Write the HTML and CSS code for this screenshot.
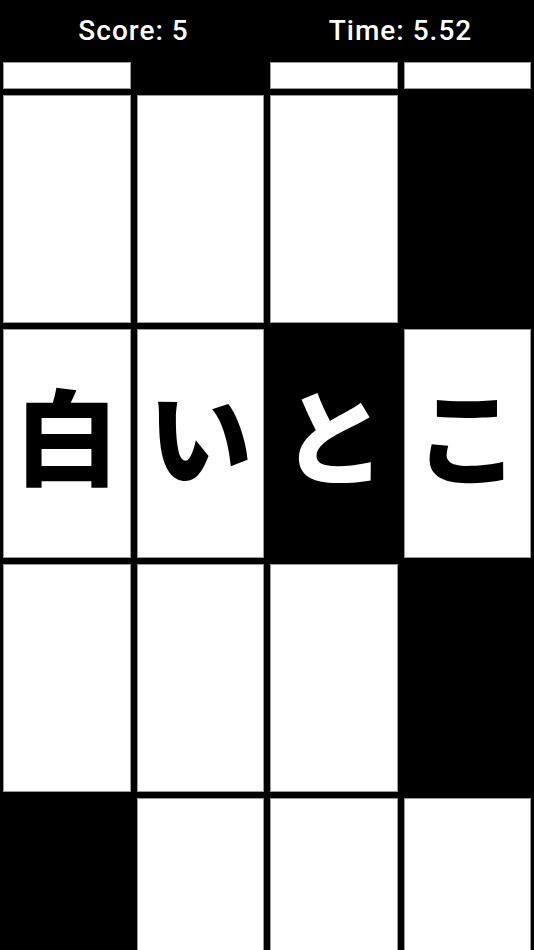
FILE: index.html
```html
<!DOCTYPE html>
<html lang="ja">
<head>
<meta charset="utf-8">
<title>Piano Tiles</title>
<link rel="stylesheet" href="styles.css">
</head>
<body>
<div class="screen">
  <header class="hud">
    <div class="hud-item">Score: 5</div>
    <div class="hud-item">Time: 5.52</div>
  </header>
  <main class="board">
    <div class="tile partial"></div>
    <div class="tile partial black"></div>
    <div class="tile partial"></div>
    <div class="tile partial"></div>

    <div class="tile"></div>
    <div class="tile"></div>
    <div class="tile"></div>
    <div class="tile black"></div>

    <div class="tile"><span class="glyph">白</span></div>
    <div class="tile"><span class="glyph">い</span></div>
    <div class="tile black"><span class="glyph">と</span></div>
    <div class="tile"><span class="glyph">こ</span></div>

    <div class="tile"></div>
    <div class="tile"></div>
    <div class="tile"></div>
    <div class="tile black"></div>

    <div class="tile black"></div>
    <div class="tile"></div>
    <div class="tile"></div>
    <div class="tile"></div>
  </main>
</div>
</body>
</html>
```

FILE: styles.css
```css
html, body {
  margin: 0;
  padding: 0;
  background: #000;
  overflow: hidden;
}

.screen {
  width: 534px;
  height: 950px;
  overflow: hidden;
  background: #000;
}

.hud {
  display: flex;
  height: 59px;
  align-items: center;
}

.hud-item {
  flex: 1;
  text-align: center;
  color: #fff;
  font-family: "Roboto", "Liberation Sans", Arial, sans-serif;
  font-weight: 500;
  font-size: 28px;
  letter-spacing: 1px;
  line-height: 1;
  padding-top: 2px;
}

.board {
  display: grid;
  grid-template-columns: repeat(4, 1fr);
  grid-template-rows: 33px repeat(4, 234.4px);
}

.tile {
  box-sizing: border-box;
  border: 3px solid #000;
  background: #fff;
  box-shadow: inset 0 0 0 1px #9a9a9a;
  display: flex;
  align-items: center;
  justify-content: center;
  overflow: hidden;
}

.tile.black {
  background: #000;
  box-shadow: none;
}

.glyph {
  font-family: "Noto Sans CJK JP", sans-serif;
  font-weight: 900;
  font-size: 104px;
  line-height: 1;
  color: #000;
  margin-top: -22px;
}

.tile.black .glyph {
  color: #fff;
}
```
